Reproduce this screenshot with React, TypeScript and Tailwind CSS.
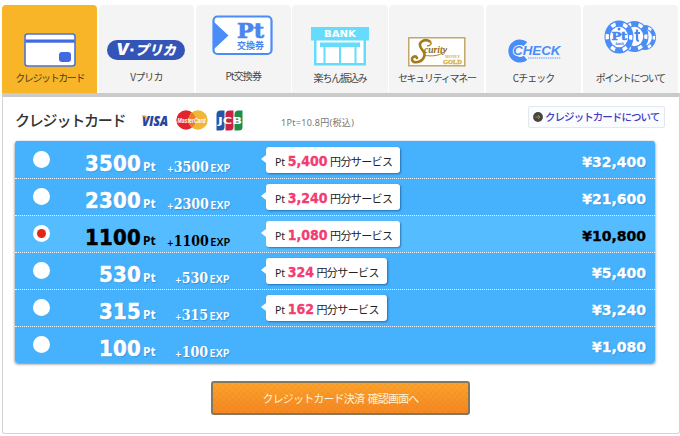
import React from "react";

function CardIcon() {
  return (
    <svg width="52" height="34" viewBox="0 0 52 34" className="block">
      <rect x="1" y="1" width="50" height="32" rx="2.5" fill="#fff" stroke="#4a74d8" strokeWidth="1.6" />
      <rect x="1.5" y="6.5" width="49" height="3.2" fill="#4169e1" />
      <rect x="35" y="19" width="12" height="10" rx="3" fill="#4169e1" />
    </svg>
  );
}

function VPrecaIcon() {
  return (
    <svg width="78" height="20" viewBox="0 0 78 20" className="block">
      <rect width="78" height="20" rx="10" fill="#3355b8" />
      <g fill="#fff" fontWeight="900" fontStyle="italic">
        <text x="9" y="15.3" fontSize="15.5" fontFamily="Inter" textLength="13" lengthAdjust="spacingAndGlyphs">V</text>
        <text x="28" y="14.8" fontSize="13.5" fontFamily="Noto Sans CJK JP" textLength="41" lengthAdjust="spacingAndGlyphs">プリカ</text>
      </g>
      <rect x="23.5" y="8.5" width="3" height="3" fill="#fff" />
    </svg>
  );
}

function TicketIcon() {
  return (
    <svg width="62" height="42" viewBox="0 0 62 42" className="block">
      <rect x="1.5" y="1.5" width="58" height="37.5" rx="4" fill="#fff" stroke="#4a8cf8" strokeWidth="2.2" />
      <path d="M2 7 16.5 20.5 2 34Z" fill="#4a8cf8" />
      <g fill="#4a86ee" fontWeight="bold">
        <text x="25" y="22.500" fontSize="20" fontFamily="DejaVu Serif" textLength="27" lengthAdjust="spacingAndGlyphs" stroke="#4a86ee" strokeWidth=".7">Pt</text>
        <text x="25" y="34" fontSize="9.5" fontFamily="Noto Sans CJK JP" textLength="27" lengthAdjust="spacingAndGlyphs">交換券</text>
      </g>
    </svg>
  );
}

function BankIcon() {
  return (
    <svg width="60" height="40" viewBox="0 0 60 40" className="block">
      <path fill="#fff" d="M4 12H56V39H4z" />
      <g fill="#65dcfb">
        <path d="M1 1H59V14.5H1z" />
        <path d="M4 14H6.500V37H53.500V14H56V39.500H4z" />
        <path d="M10 16.500H50V21H10z" />
        <path d="M13.500 21H15.500V37H13.500zM29 21H31V37H29zM44.500 21H46.500V37H44.500z" />
      </g>
      <text x="14" y="10.700" fontSize="8" fontWeight="bold" fontFamily="DejaVu Sans" textLength="32" lengthAdjust="spacingAndGlyphs" fill="#fff">BANK</text>
    </svg>
  );
}

function SecurityIcon() {
  return (
    <svg width="58" height="30" viewBox="0 0 58 30" className="block">
      <rect x=".8" y=".8" width="56" height="28" fill="#fff" stroke="#b99b55" strokeWidth="1.3" />
      <path d="M22 4.500C17 1 10 5 12.500 10c2 4 6 6 3 11-3 5-12 6-11.500 1 .4-3 4-3.500 5-1" fill="none" stroke="#a47b18" strokeWidth="2.600" strokeLinecap="round" />
      <path d="M22 4.500c2.500 2 0 5-3 4" fill="none" stroke="#b88d20" strokeWidth="1.500" />
      <path d="M15 18C24 20 34 19 39 12" fill="none" stroke="#a98120" strokeWidth="1" />
      <text x="16" y="15.500" fontSize="9.500" fontStyle="italic" fontWeight="bold" fontFamily="Liberation Serif" textLength="23" lengthAdjust="spacingAndGlyphs" fill="#8f6e1b">curity</text>
      <g fill="#d5ac42" fontFamily="Liberation Serif" fontWeight="bold">
        <text x="37" y="21" fontSize="4.500" textLength="15" lengthAdjust="spacingAndGlyphs">MONEY</text>
        <text x="35" y="27" fontSize="6.500" textLength="19" lengthAdjust="spacingAndGlyphs" stroke="#d5ac42" strokeWidth=".3">GOLD</text>
      </g>
    </svg>
  );
}

function CheckIcon() {
  return (
    <svg width="56" height="24" viewBox="0 0 56 24" className="block">
      <path d="M19.500 5.200A8.800 8.800 0 1 0 19.500 18.800" fill="none" stroke="#4a8cf8" strokeWidth="5.600" />
      <text x="7" y="15.800" fontSize="12" fontWeight="900" fontStyle="italic" fontFamily="Liberation Sans" textLength="47.500" lengthAdjust="spacingAndGlyphs" fill="#4a8cf8" stroke="#f4f4f4" strokeWidth="1.600" paintOrder="stroke">CHECK</text>
      <path d="M22 19H54.500" stroke="#4a8cf8" strokeWidth="1.400" strokeDasharray="1.500 .7" opacity=".55" />
    </svg>
  );
}

function Chip({ cx, cy, rx, ry }: { cx: number; cy: number; rx: number; ry: number }) {
  const seg = (2 * Math.PI * 13) / 12;
  return (
    <g transform={`translate(${cx} ${cy}) scale(${rx / 16} ${ry / 16})`}>
      <circle r="16" fill="#4a8cf8" />
      <circle r="13" fill="none" stroke="#fff" strokeWidth="3.600" strokeDasharray={`${seg * 0.75} ${seg * 1.25}`} strokeDashoffset={seg * 0.375} />
      <circle r="10" fill="#fff" />
    </g>
  );
}

function ChipsIcon() {
  return (
    <svg width="54" height="36" viewBox="0 0 54 36" className="block">
      <Chip cx={42} cy={18.500} rx={11} ry={12.500} />
      <Chip cx={31.500} cy={17.500} rx={14} ry={15.500} />
      <path d="M34 10.500V20Q34 22 36 21.500M31.500 14H37" fill="none" stroke="#4a86ee" strokeWidth="2.200" />
      <Chip cx={16} cy={18} rx={14.500} ry={16.500} />
      <g fill="#4a86ee" fontWeight="bold">
        <text x="8.500" y="20.500" fontSize="11" fontFamily="DejaVu Serif" textLength="15.500" lengthAdjust="spacingAndGlyphs" stroke="#4a86ee" strokeWidth=".5">Pt</text>
        <circle cx="16" cy="10" r="1.500" />
        <text x="12.500" y="26.300" fontSize="4" fontFamily="DejaVu Sans" textLength="8.500" lengthAdjust="spacingAndGlyphs">bank</text>
      </g>
    </svg>
  );
}

function Visa() {
  return (
    <svg width="29" height="20" viewBox="0 -3 29 20" className="block">
      <text x="1" y="11.500" fontSize="13.500" fontWeight="800" fontStyle="italic" fontFamily="Open Sans" textLength="26" lengthAdjust="spacingAndGlyphs" fill="#26459a" stroke="#26459a" strokeWidth=".2">VISA</text>
      <path d="M.8 1.600H5L6.300 5.500C5 3.500 3 2.500.8 2Z" fill="#e8a530" />
    </svg>
  );
}

function MasterCard() {
  return (
    <svg width="32" height="20" viewBox="0 0 32 20" className="block">
      <circle cx="10" cy="10" r="9.700" fill="#e1252b" />
      <circle cx="22" cy="10" r="9.700" fill="#f2b632" />
      <path d="M16 2.400A9.700 9.700 0 0 1 16 17.600A9.700 9.700 0 0 1 16 2.400" fill="#ec7c2c" />
      <text x="1.500" y="12.500" fontSize="7" fontWeight="bold" fontStyle="italic" fontFamily="Liberation Sans" textLength="28" lengthAdjust="spacingAndGlyphs" fill="#fff">MasterCard</text>
    </svg>
  );
}

function Jcb() {
  return (
    <svg width="27" height="21" viewBox="0 0 27 21" className="block">
      <path d="M4.500.5H8.500V17Q8.500 20.500 5 20.500H.5V4.500Q.5.500 4.500.5Z" fill="#2456a8" />
      <path d="M13.500.5H17.500V17Q17.500 20.500 14 20.500H9.500V4.500Q9.500.500 13.500.5Z" fill="#c9243f" />
      <path d="M22.500.5H26.500V17Q26.500 20.500 23 20.500H18.500V4.500Q18.500.500 22.500.5Z" fill="#1f8d48" />
      <text x="2" y="13.500" fontSize="8.500" fontWeight="bold" fontFamily="DejaVu Sans" textLength="24" lengthAdjust="spacingAndGlyphs" fill="#fff">JCB</text>
    </svg>
  );
}

const tabs = [
  { label: "クレジットカード", icon: <CardIcon />, top: "pt-[28px]", box: "h-[61px]", ls: "tracking-[-1.4px]" },
  { label: "Vプリカ", icon: <VPrecaIcon />, top: "pt-[34.500px]", box: "h-[60px]", ls: "tracking-[-0.9px]" },
  { label: "Pt交換券", icon: <TicketIcon />, top: "pt-[10px]", box: "h-[59px]", ls: "tracking-[-0.9px]" },
  { label: "楽ちん振込み", icon: <BankIcon />, top: "pt-[21px]", box: "h-[61px]", ls: "tracking-[-1.200px]" },
  { label: "セキュリティマネー", icon: <SecurityIcon />, top: "pt-[32px]", box: "h-[61px]", ls: "tracking-[-1.300px]" },
  { label: "Cチェック", icon: <CheckIcon />, top: "pt-[34px]", box: "h-[61px]", ls: "tracking-[-1px]" },
  { label: "ポイントについて", icon: <ChipsIcon />, top: "pt-[14px]", box: "h-[61px]", ls: "tracking-[-1.300px]" },
];

type Plan = { pt: string; bonus?: string; price: string; selected?: boolean };

const plans: Plan[] = [
  { pt: "3500", bonus: "5,400", price: "32,400" },
  { pt: "2300", bonus: "3,240", price: "21,600" },
  { pt: "1100", bonus: "1,080", price: "10,800", selected: true },
  { pt: "530", bonus: "324", price: "5,400" },
  { pt: "315", bonus: "162", price: "3,240" },
  { pt: "100", price: "1,080" },
];

function PlanRow({ plan, first }: { plan: Plan; first: boolean }) {
  return (
    <div
      className={`flex h-[37px] border-t ${first ? "border-[#46b1fd]" : "border-dotted border-white/90"} ${
        plan.selected ? "bg-[#55bdff] text-black" : "bg-[#46b1fd] text-white [text-shadow:1px_1px_1px_rgba(0,60,130,0.25)]"
      }`}
    >
      <div className="w-[53px] shrink-0 pt-[9px] pl-[18px]">
        <div className="flex size-[17px] items-center justify-center rounded-full bg-white">
          {plan.selected && <div className="size-[9px] rounded-full bg-[#e42618]" />}
        </div>
      </div>
      <div className="flex w-[73px] shrink-0 items-baseline justify-end pt-[5px] font-['DejaVu_Sans_Condensed','DejaVu_Sans',sans-serif] text-[22px] leading-[34px] font-bold tracking-[0.2px] [-webkit-text-stroke:0.5px] [font-stretch:condensed]">
        {plan.pt}
      </div>
      <div className="w-[16px] shrink-0 pt-[8px] pl-[2px] font-['Noto_Sans',sans-serif] text-[12px] leading-[34px] font-bold">
        Pt
      </div>
      <div className={`flex w-[92px] shrink-0 items-baseline pt-[8px] leading-[34px] font-bold ${plan.pt.length === 4 ? "pl-[10px]" : "pl-[18px]"}`}>
        <span className="font-['DejaVu_Sans',sans-serif] text-[8px]">+</span>
        <span className="font-['DejaVu_Serif_Condensed','DejaVu_Serif',serif] text-[14px] [font-stretch:condensed]">{plan.pt}</span>
        <span className="pl-[1.500px] font-['Noto_Sans',sans-serif] text-[11px] font-semibold">EXP</span>
      </div>
      <div className="flex-1 pt-[5px]">
        {plan.bonus && (
          <div className="flex items-start">
            <div className="mt-[8px] ml-[12px] h-0 w-0 border-y-4 border-r-5 border-y-transparent border-r-white" />
            <div
              className={`flex h-[26px] items-baseline rounded-[3px] bg-white pl-[9px] leading-[29px] whitespace-nowrap text-[#222] shadow-[1px_1px_2px_rgba(0,50,100,0.5)] [text-shadow:none] ${
                plan.bonus.length === 5 ? "w-[134px]" : "w-[121px]"
              }`}
            >
              <span className="font-['Noto_Sans',sans-serif] text-[10.500px]">Pt</span>
              <span className="px-[2.500px] font-['DejaVu_Sans_Condensed','DejaVu_Sans',sans-serif] text-[14px] font-bold text-[#f23c72] [-webkit-text-stroke:0.3px] [font-stretch:condensed]">
                {plan.bonus}
              </span>
              <span className="font-['Noto_Sans_CJK_JP',sans-serif] text-[11px] tracking-[-0.6px]">円分サービス</span>
            </div>
          </div>
        )}
      </div>
      <div className="pt-[4px] pr-[9px] font-['DejaVu_Sans',sans-serif] text-[14px] leading-[32px] font-bold [-webkit-text-stroke:0.300px]">
        ¥{plan.price}
      </div>
    </div>
  );
}

export default function App() {
  return (
    <div className="h-[436px] w-[680px] overflow-hidden bg-white pt-[5px] pl-[2px] font-['Noto_Sans_CJK_JP',sans-serif]">
      <div className="grid h-[88px] w-[676px] grid-cols-7 gap-[1.500px]">
        {tabs.map((t, i) => (
          <div key={t.label} className={`min-w-0 rounded-t-[4px] ${i === 0 ? "bg-[#f8b528] text-[#4f3d16]" : "bg-[#f4f4f4] text-[#444]"}`}>
            <div className={`flex justify-center ${t.box} ${t.top}`}>{t.icon}</div>
            <div className={`flex h-[22px] items-center justify-center text-[10px] whitespace-nowrap ${t.ls}`}>{t.label}</div>
          </div>
        ))}
      </div>
      <div className="h-[341px] w-[678px] rounded-b-[3px] border-x border-t-4 border-b border-x-[#d4d4d4] border-t-[#cacaca] border-b-[#d4d4d4] pl-[12px]">
        <div className="flex h-[44px]">
          <h1 className="w-[126px] shrink-0 pt-[8px] text-[15px] leading-[30px] font-medium tracking-[-1.200px] whitespace-nowrap text-[#333]">クレジットカード</h1>
          <div className="flex w-[140px] shrink-0 pt-[13px]">
            <div className="mt-[1px]"><Visa /></div>
            <div className="ml-[6px]"><MasterCard /></div>
            <div className="ml-[8px]"><Jcb /></div>
          </div>
          <div className="w-[247px] shrink-0 pt-[14px] font-['Noto_Sans','Noto_Sans_CJK_JP',sans-serif] text-[9px] leading-[24px] tracking-[0.3px] text-[#777]">1Pt=10.8円(税込)</div>
          <div className="mt-[9px] flex h-[22px] w-[137px] shrink-0 items-center rounded-[2px] border border-[#e4e7ec] bg-[#fafcff] pl-[4px]">
            <svg width="10" height="10" viewBox="0 0 10 10" className="shrink-0">
              <circle cx="5" cy="5" r="4.900" fill="#444" />
              <path d="M2.500 5H7M5 3L7 5L5 7" stroke="#a68e28" fill="none" />
            </svg>
            <span className="ml-[2px] text-[10.500px] font-medium tracking-[-0.950px] whitespace-nowrap text-[#3f39c8]">クレジットカードについて</span>
          </div>
        </div>
        <div className="h-[222px] w-[640px] overflow-hidden rounded-[3px] shadow-[0_1px_3px_rgba(0,0,0,0.55)]">
          {plans.map((p, i) => (
            <PlanRow key={p.pt} plan={p} first={i === 0} />
          ))}
        </div>
        <button className="mt-[18px] ml-[196px] block h-[34px] w-[259px] rounded-[3px] border-2 border-[#83775f] bg-[repeating-conic-gradient(rgba(190,70,0,0.06)_0_25%,transparent_0_50%),linear-gradient(#fca32b,#f58822)] bg-[length:6px_6px,100%_100%] text-[11px] leading-[28px] tracking-[-0.850px] text-[#fff3d6] [word-spacing:2px]">
          クレジットカード決済 確認画面へ
        </button>
      </div>
    </div>
  );
}
